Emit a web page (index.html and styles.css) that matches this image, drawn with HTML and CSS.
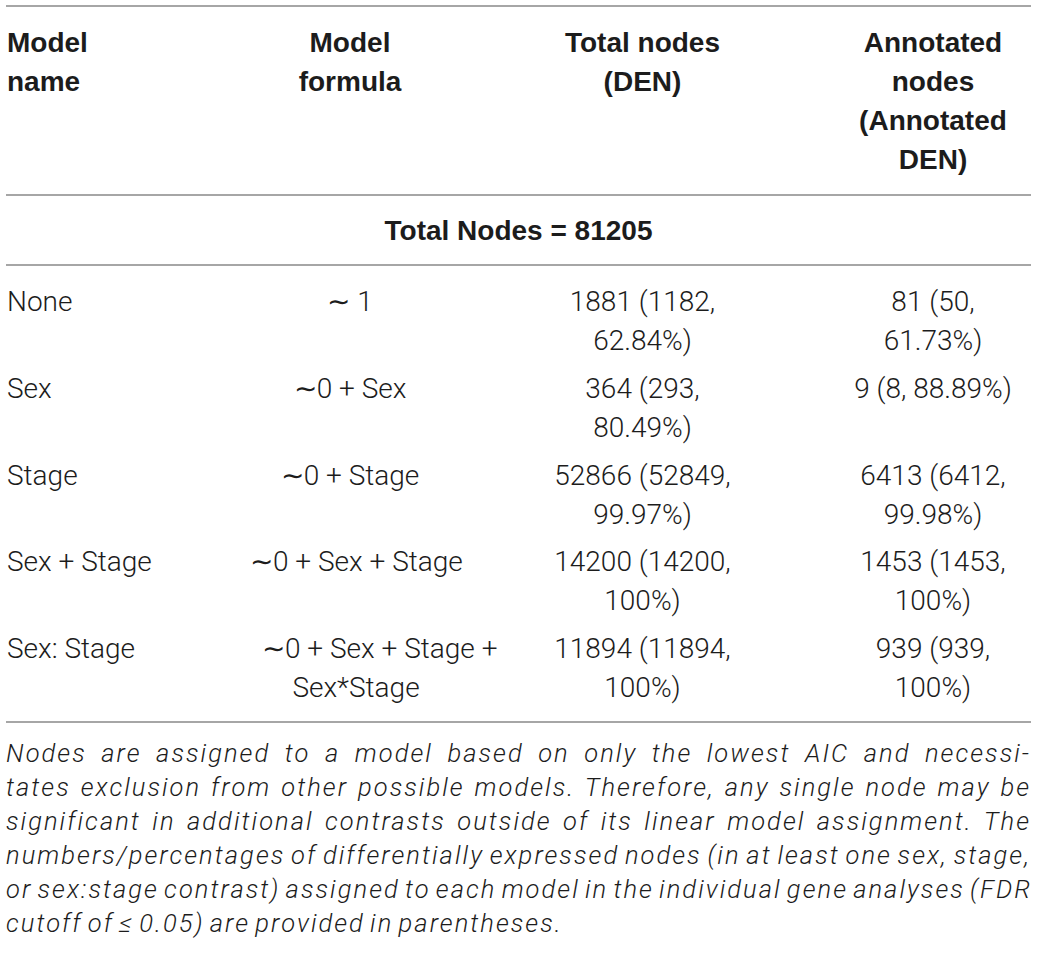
FILE: index.html
```
<!DOCTYPE html>
<html lang="en">
<head>
<meta charset="utf-8">
<title>Table</title>
<link rel="stylesheet" href="styles.css">
</head>
<body>
<div class="page">
  <div class="tbl">
    <div class="row head">
      <div class="c1">Model<br>name</div>
      <div class="c2">Model<br>formula</div>
      <div class="c3">Total nodes<br>(DEN)</div>
      <div class="c4">Annotated<br>nodes<br>(Annotated<br>DEN)</div>
    </div>
    <div class="section">Total Nodes = 81205</div>
    <div class="body">
      <div class="row">
        <div class="c1">None</div>
        <div class="c2">∼ 1</div>
        <div class="c3">1881 (1182,<br>62.84%)</div>
        <div class="c4">81 (50,<br>61.73%)</div>
      </div>
      <div class="row">
        <div class="c1">Sex</div>
        <div class="c2">∼0 + Sex</div>
        <div class="c3">364 (293,<br>80.49%)</div>
        <div class="c4">9 (8, 88.89%)</div>
      </div>
      <div class="row">
        <div class="c1">Stage</div>
        <div class="c2">∼0 + Stage</div>
        <div class="c3">52866 (52849,<br>99.97%)</div>
        <div class="c4">6413 (6412,<br>99.98%)</div>
      </div>
      <div class="row">
        <div class="c1">Sex + Stage</div>
        <div class="c2">∼0 + Sex + Stage</div>
        <div class="c3">14200 (14200,<br>100%)</div>
        <div class="c4">1453 (1453,<br>100%)</div>
      </div>
      <div class="row">
        <div class="c1">Sex: Stage</div>
        <div class="c2 wide">∼0 + Sex + Stage +<br>Sex*Stage</div>
        <div class="c3">11894 (11894,<br>100%)</div>
        <div class="c4">939 (939,<br>100%)</div>
      </div>
    </div>
  </div>
  <p class="note">
    <span class="ln">Nodes are assigned to a model based on only the lowest AIC and necessi-</span>
    <span class="ln">tates exclusion from other possible models. Therefore, any single node may be</span>
    <span class="ln">significant in additional contrasts outside of its linear model assignment. The</span>
    <span class="ln">numbers/percentages of differentially expressed nodes (in at least one sex, stage,</span>
    <span class="ln">or sex:stage contrast) assigned to each model in the individual gene analyses (FDR</span>
    <span class="ln last">cutoff of ≤ 0.05) are provided in parentheses.</span>
  </p>
</div>
</body>
</html>
```

FILE: styles.css
```
html, body {
  margin: 0;
  padding: 0;
  background: #ffffff;
}
.page {
  width: 1025px;
  padding: 5px 9px 0 6px;
  color: #1c1c1c;
  font-family: Roboto, "Liberation Sans", sans-serif;
  font-weight: 300;
}
.tbl {
  border-top: 2px solid #a6a6a6;
  border-bottom: 2px solid #a6a6a6;
}
.row {
  display: grid;
  grid-template-columns: 244px 200px 385px 196px;
  font-size: 28px;
  line-height: 39px;
  padding: 4px 0 4.75px;
}
.row > div {
  text-align: center;
  white-space: nowrap;
}
.row > .c1 { text-align: left; padding-left: 1px; }
.row > .wide { padding-left: 12px; }
.head {
  font-family: "Liberation Sans", Roboto, sans-serif;
  font-weight: 700;
  padding: 16px 0 15px;
  border-bottom: 2px solid #a6a6a6;
}
.section {
  font-family: "Liberation Sans", Roboto, sans-serif;
  font-size: 28px;
  line-height: 39px;
  font-weight: 700;
  text-align: center;
  padding: 15px 0 14px;
  border-bottom: 2px solid #a6a6a6;
}
.body {
  padding: 12px 0 9px;
}
.note {
  margin: 13px 0 0;
  font-size: 25.5px;
  line-height: 34px;
  font-style: italic;
  letter-spacing: 2.05px;
  word-spacing: -3px;
}
.ln {
  display: block;
  text-align: justify;
  text-align-last: justify;
  white-space: nowrap;
}
.ln.last {
  text-align-last: left;
}
```
